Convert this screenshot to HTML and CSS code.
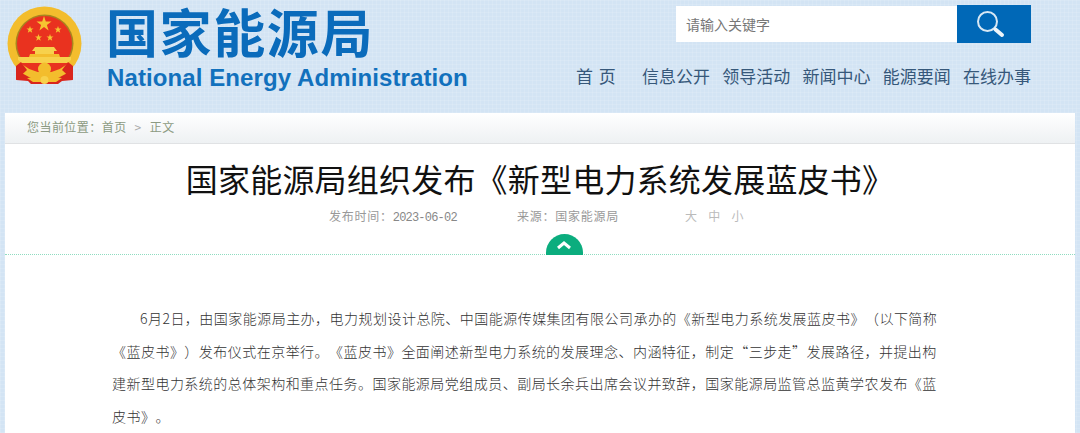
FILE: index.html
```html
<!DOCTYPE html>
<html lang="zh-CN">
<head>
    <meta charset="UTF-8">
    <meta name="viewport" content="width=device-width, initial-scale=1.0">
    <title>国家能源局组织发布《新型电力系统发展蓝皮书》</title>
    <link rel="stylesheet" href="styles.css">
</head>
<body>
    <header class="header">
        <div class="brand">
            <svg class="emblem" viewBox="7 5 80 84" width="80" height="84" aria-hidden="true">
                <path d="M21 62 L16 80 L28 81 L31 84 L58 84 L62 81 L73 80 L68 62 Z" fill="#d9251c"/>
                <circle cx="44.500" cy="43.500" r="37" fill="#f3bd2d"/>
                <circle cx="44.500" cy="43.500" r="29" fill="#a8841f"/>
                <circle cx="44.500" cy="43.500" r="27.500" fill="#e9321f"/>
                <path d="M44 16 L45.800 21.500 L51.500 21.500 L46.900 24.900 L48.600 30.500 L44 27 L39.400 30.500 L41.100 24.900 L36.500 21.500 L42.200 21.500 Z" fill="#f6c431"/>
                <path d="M30 26 L30.900 28.500 L33.500 28.500 L31.400 30.100 L32.200 32.800 L30 31.200 L27.800 32.800 L28.600 30.100 L26.500 28.500 L29.100 28.500 Z" fill="#f6c431"/>
                <path d="M58 26 L58.900 28.500 L61.500 28.500 L59.400 30.100 L60.200 32.800 L58 31.200 L55.800 32.800 L56.600 30.100 L54.500 28.500 L57.100 28.500 Z" fill="#f6c431"/>
                <path d="M38.500 34 L39.400 36.500 L42 36.500 L39.900 38.100 L40.700 40.800 L38.500 39.200 L36.300 40.800 L37.100 38.100 L35 36.500 L37.600 36.500 Z" fill="#f6c431"/>
                <path d="M50 34 L50.900 36.500 L53.500 36.500 L51.400 38.100 L52.200 40.800 L50 39.200 L47.800 40.800 L48.600 38.100 L46.500 36.500 L49.100 36.500 Z" fill="#f6c431"/>
                <path d="M35 47 H54 L57 51 H54 V54 H35 V51 H32 Z" fill="#f7d14c"/>
                <path d="M18 57 H71 V63 H18 Z" fill="#f7d14c"/>
                <path d="M30 54 H59 L60 57 H29 Z" fill="#f3bd2d"/>
                <path d="M19 63 C26 71 36 73 44.500 73 C53 73 63 71 70 63 Z" fill="#e9321f"/>
                <path d="M17 61 C25 71 35 74 44.500 74 C54 74 64 71 72 61" fill="none" stroke="#f3bd2d" stroke-width="3"/>
                <path d="M16 66 L21 62 L27 70 L16 80 Z" fill="#d9251c"/>
                <path d="M73 66 L68 62 L62 70 L73 80 Z" fill="#d9251c"/>
                <circle cx="44.500" cy="69" r="6.500" fill="#f3bd2d"/>
                <path d="M27 78 L38 77 L44.500 73 L51 77 L62 78 L56 82 L33 82 Z" fill="#f3bd2d"/>
                <circle cx="44.500" cy="80" r="4" fill="#f7d14c"/>
            </svg>
            <div class="brand-text">
                <div class="brand-cn">国家能源局</div>
                <div class="brand-en">National Energy Administration</div>
            </div>
        </div>
        <div class="header-right">
            <form class="search">
                <input class="search-input" type="text" placeholder="请输入关键字">
                <button class="search-btn" type="button" aria-label="搜索">
                    <svg viewBox="0 0 30 30" width="30" height="30" aria-hidden="true">
                        <circle cx="12.500" cy="12.500" r="9.500" fill="none" stroke="#d8e8f4" stroke-width="2"/>
                        <path d="M20.500 20.500 L27 26" stroke="#eef5fa" stroke-width="4" stroke-linecap="round"/>
                    </svg>
                </button>
            </form>
            <nav class="nav">
                <a href="#" class="nav-home">首 页</a>
                <a href="#">信息公开</a>
                <a href="#">领导活动</a>
                <a href="#">新闻中心</a>
                <a href="#">能源要闻</a>
                <a href="#">在线办事</a>
            </nav>
        </div>
    </header>

    <main class="content-card">
        <div class="crumbs">您当前位置：首页<span class="crumb-sep">&gt;</span>正文</div>
        <h1 class="title">国家能源局组织发布《新型电力系统发展蓝皮书》</h1>
        <div class="meta">
            <span class="meta-date">发布时间：<span class="meta-num">2023-06-02</span></span>
            <span class="meta-source">来源：国家能源局</span>
            <span class="meta-size">大 中 小</span>
        </div>
        <div class="divider">
            <span class="collapse-btn">
                <svg viewBox="0 0 16 10" width="16" height="10" aria-hidden="true">
                    <path d="M2 8 L8 3 L14 8" fill="none" stroke="#fff" stroke-width="3"/>
                </svg>
            </span>
        </div>
        <article class="article">
            <p>6月2日，由国家能源局主办，电力规划设计总院、中国能源传媒集团有限公司承办的《新型电力系统发展蓝皮书》（以下简称《蓝皮书》）发布仪式在京举行。《蓝皮书》全面阐述新型电力系统的发展理念、内涵特征，制定“三步走”发展路径，并提出构建新型电力系统的总体架构和重点任务。国家能源局党组成员、副局长余兵出席会议并致辞，国家能源局监管总监黄学农发布《蓝皮书》。</p>
        </article>
    </main>
</body>
</html>
```

FILE: styles.css
```css
* {
    margin: 0;
    padding: 0;
    box-sizing: border-box;
}

html, body {
    height: 433px;
    overflow: hidden;
}

body {
    font-family: "Liberation Sans", "Noto Sans CJK SC", sans-serif;
    background-color: #d3e4f4;
    background-image:
        repeating-linear-gradient(0deg, rgba(255,255,255,0.12) 0 1px, transparent 1px 4px),
        repeating-linear-gradient(90deg, rgba(255,255,255,0.12) 0 1px, transparent 1px 4px);
}

.header {
    height: 113px;
    padding: 5px 49px 0 7px;
    display: flex;
    justify-content: space-between;
}

.brand {
    display: flex;
    align-items: flex-start;
    gap: 20px;
}

.emblem {
    flex: none;
}

.brand-cn {
    margin-left: -1px;
    font-family: "Noto Sans CJK SC", sans-serif;
    font-size: 52px;
    font-weight: 700;
    line-height: 52px;
    letter-spacing: 1.600px;
    color: #0a6bbb;
}

.brand-en {
    margin-top: 7px;
    font-size: 24px;
    font-weight: 700;
    line-height: 28px;
    letter-spacing: 0.100px;
    color: #1271bd;
    white-space: nowrap;
}

.header-right {
    width: 456px;
    display: flex;
    flex-direction: column;
    align-items: flex-end;
}

.search {
    display: flex;
    align-items: center;
}

.search-input {
    width: 281px;
    height: 36px;
    border: none;
    padding: 0 10px;
    background: #fff;
    font-family: "Noto Sans CJK SC", sans-serif;
    font-size: 14px;
    outline: none;
}

.search-input::placeholder {
    color: #777;
    opacity: 1;
}

.search-btn {
    width: 74px;
    height: 38px;
    border: none;
    background: #0068b7;
    display: flex;
    align-items: center;
    justify-content: center;
}

.search-btn svg {
    margin-right: 8px;
}

.nav {
    width: 100%;
    margin-top: 20px;
    padding-left: 1px;
    display: flex;
    gap: 12.250px;
    font-family: "Noto Sans CJK SC", sans-serif;
    font-size: 17px;
    line-height: 26px;
}

.nav a {
    color: #36587a;
    text-decoration: none;
    white-space: nowrap;
}

.nav .nav-home {
    width: 54px;
    word-spacing: 2px;
}

.content-card {
    margin: 0 5px;
    height: 320px;
    background: #fff;
}

.crumbs {
    height: 31px;
    padding-left: 22px;
    font-family: "Noto Sans CJK SC", sans-serif;
    font-size: 12px;
    line-height: 28px;
    letter-spacing: 0.450px;
    color: #8c9a82;
    background: linear-gradient(#fff, #eef1f3);
    border-bottom: 1px solid #e0e2e4;
}

.crumb-sep {
    margin: 0 8px;
    color: #aaa;
}

.title {
    margin-top: 11px;
    font-family: "Noto Sans CJK SC", sans-serif;
    font-size: 32px;
    font-weight: 400;
    line-height: 46px;
    letter-spacing: 0.200px;
    text-align: center;
    color: #111;
    text-spacing-trim: space-all;
}

.meta {
    margin-top: 6px;
    padding-left: 324px;
    display: flex;
    font-family: "Noto Sans CJK SC", sans-serif;
    font-size: 12px;
    line-height: 18px;
    letter-spacing: 0.750px;
    color: #999;
}

.meta-num {
    font-family: "Liberation Mono", monospace;
    font-size: 12px;
    letter-spacing: -0.800px;
    color: #888;
}

.meta-date {
    width: 188px;
}

.meta-source {
    width: 168px;
}

.meta-size {
    color: #bbb;
    word-spacing: 7px;
}

.divider {
    height: 28px;
    padding-left: 48px;
    display: flex;
    justify-content: center;
    align-items: flex-end;
    border-bottom: 1px dotted #8fdcc0;
}

.collapse-btn {
    width: 37px;
    height: 21px;
    background: #0bad7e;
    border-radius: 19px 19px 0 0;
    display: flex;
    align-items: center;
    justify-content: center;
    position: relative;
    top: 1px;
}

.article {
    padding: 47px 130px 0 107px;
    font-family: "Noto Sans CJK SC", sans-serif;
    font-size: 14px;
    font-weight: 300;
    line-height: 32.700px;
    letter-spacing: 0.470px;
    color: #333;
    text-spacing-trim: space-all;
}

.article p {
    text-indent: 2em;
}
```
